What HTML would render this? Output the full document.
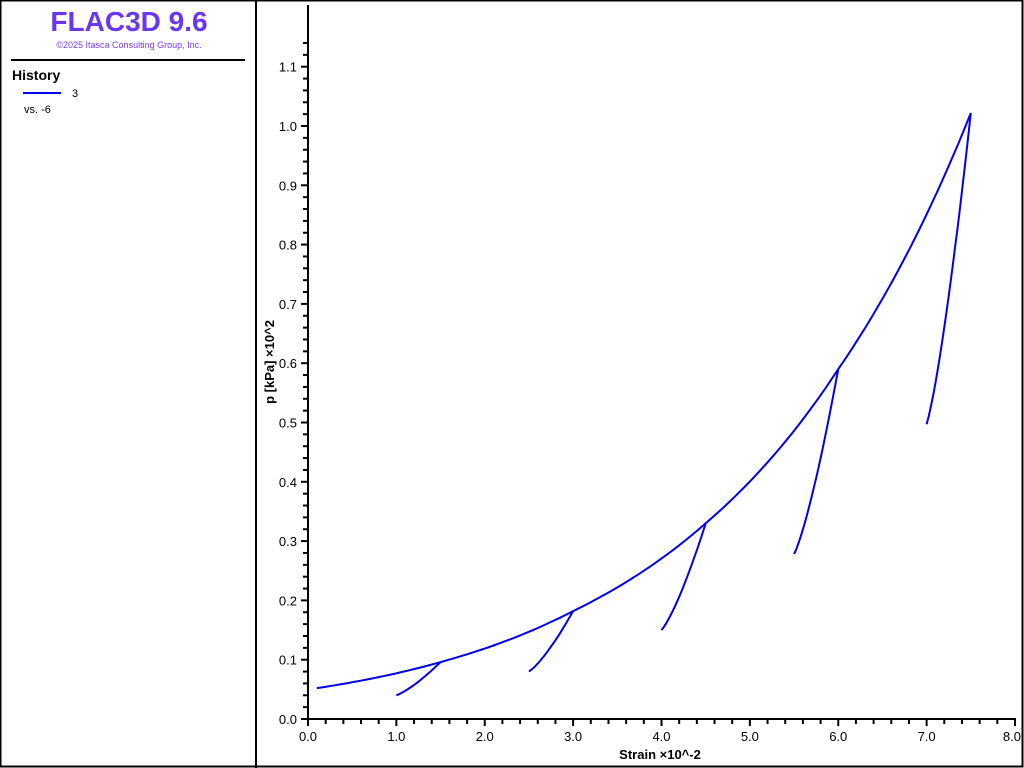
<!DOCTYPE html>
<html><head><meta charset="utf-8"><style>
html,body{margin:0;padding:0;background:#fff;}
body{width:1024px;height:768px;position:relative;overflow:hidden;font-family:"Liberation Sans",sans-serif;}
</style></head><body>
<svg id="s" width="1024" height="768" xmlns="http://www.w3.org/2000/svg" style="position:absolute;left:0;top:0">
<rect x="0.5" y="0.5" width="1022" height="766" fill="none" stroke="#000" stroke-width="2"/>
<line x1="256" y1="0" x2="256" y2="768" stroke="#000" stroke-width="2"/>
<text x="129" y="31" text-anchor="middle" font-size="28" font-weight="bold" fill="#6a36f5" font-family="Liberation Sans, sans-serif">FLAC3D 9.6</text>
<text x="129" y="48" text-anchor="middle" font-size="9" fill="#7a3af0" font-family="Liberation Sans, sans-serif">©2025 Itasca Consulting Group, Inc.</text>
<line x1="11" y1="60" x2="245" y2="60" stroke="#000" stroke-width="2"/>
<text x="12" y="80" font-size="14" font-weight="bold" fill="#000">History</text>
<line x1="23" y1="93" x2="61" y2="93" stroke="#0000ee" stroke-width="2"/>
<text x="72" y="97" font-size="11" fill="#000">3</text>
<text x="24" y="113" font-size="11" fill="#000">vs. -6</text>
<g id="ax" stroke="#000" stroke-width="2"></g>
<g id="lb" font-size="13" fill="#000" font-family="Liberation Sans, sans-serif"></g>
<text x="660" y="759" text-anchor="middle" font-size="13" font-weight="bold">Strain ×10^-2</text>
<text transform="translate(274,362) rotate(-90)" text-anchor="middle" font-size="13" font-weight="bold">p [kPa] ×10^2</text>
<g id="cv" fill="none" stroke="#0000ee" stroke-width="2"></g>
</svg>
<script>
var X=function(v){return 308+v*88.375},Y=function(v){return 719-v*593};
var ax=document.getElementById('ax'),lb=document.getElementById('lb'),cv=document.getElementById('cv');
var h='<line x1="308" y1="5" x2="308" y2="720"/><line x1="307" y1="719" x2="1016" y2="719"/>';
for(var i=0;i<=57;i++){var y=Y(i*0.02);var maj=i%5==0;h+='<line x1="'+(maj?301:303)+'" y1="'+y+'" x2="308" y2="'+y+'"/>';}
for(var i=0;i<=40;i++){var x=X(i*0.2);var maj=i%5==0;h+='<line x1="'+x+'" y1="719" x2="'+x+'" y2="'+(maj?726:724)+'"/>';}
ax.innerHTML=h;
var t='';
for(var i=0;i<=11;i++){t+='<text x="297" y="'+(Y(i/10)+5)+'" text-anchor="end">'+(i/10).toFixed(1)+'</text>';}
for(var i=0;i<=8;i++){t+='<text x="'+(i==8?1021:X(i))+'" y="741" text-anchor="'+(i==8?'end':'middle')+'">'+i.toFixed(1)+'</text>';}
lb.innerHTML=t;
var pts=[[0.1,.052],[1.5,.096],[3,.182],[4.5,.33],[6,.59],[7.5,1.022]];
var d='M'+X(.1)+' '+Y(.052);
for(var k=0;k<pts.length-1;k++){var a=pts[k],b=pts[k+1];var r=Math.log(b[1]/a[1]);
for(var j=1;j<=20;j++){var f=j/20;d+=' L'+X(a[0]+(b[0]-a[0])*f).toFixed(1)+' '+Y(a[1]*Math.exp(r*f)).toFixed(1);}}
var br=[[1,.04,1.5,.096],[2.5,.08,3,.182],[4,.15,4.5,.33],[5.5,.278,6,.59],[7,.497,7.5,1.022]];
br.forEach(function(q){d+=' M'+X(q[0])+' '+Y(q[1]);
for(var j=1;j<=20;j++){var f=j/20;var g=Math.pow(f,1.5);d+=' L'+X(q[0]+(q[2]-q[0])*f).toFixed(1)+' '+Y(q[1]+(q[3]-q[1])*(0.6*g+0.4*f)).toFixed(1);}});
cv.innerHTML='<path d="'+d+'"/>';
</script>
</body></html>
